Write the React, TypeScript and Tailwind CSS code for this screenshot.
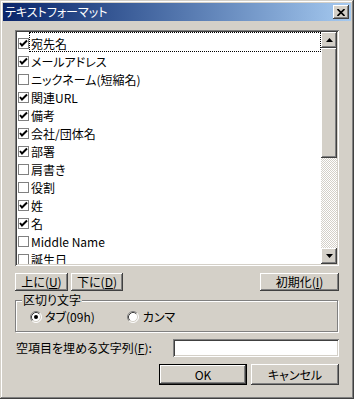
import React from "react";

const bevelOut =
  "shadow-[inset_-1px_-1px_#404040,inset_1px_1px_#ffffff,inset_-2px_-2px_#808080,inset_2px_2px_#d4d0c8]";
const sunken =
  "shadow-[inset_1px_1px_#808080,inset_-1px_-1px_#ffffff,inset_2px_2px_#404040,inset_-2px_-2px_#d4d0c8]";

const items: [string, boolean][] = [
  ["宛先名", true],
  ["メールアドレス", true],
  ["ニックネーム(短縮名)", false],
  ["関連URL", true],
  ["備考", true],
  ["会社/団体名", true],
  ["部署", true],
  ["肩書き", false],
  ["役割", false],
  ["姓", true],
  ["名", true],
  ["Middle Name", false],
  ["誕生日", false],
];

function Check({ on }: { on: boolean }) {
  return (
    <span className="w-[11px] h-[11px] border border-[#808080] bg-white flex items-center justify-center shrink-0">
      {on && (
        <svg width="9" height="9" viewBox="0 0 9 9">
          <path d="M1 4 L3 6.5 L8 1.5" stroke="#000" strokeWidth="2" fill="none" />
        </svg>
      )}
    </span>
  );
}

function Radio({ on }: { on: boolean }) {
  return (
    <svg width="12" height="12" viewBox="0 0 12 12" className="shrink-0">
      <circle cx="6" cy="6" r="5" fill="#fff" />
      <path d="M2.11 9.89 A5.5 5.5 0 0 1 9.89 2.11" stroke="#808080" fill="none" />
      <path d="M9.89 2.11 A5.5 5.5 0 0 1 2.11 9.89" stroke="#ffffff" fill="none" />
      <path d="M2.82 9.18 A4.5 4.5 0 0 1 9.18 2.82" stroke="#404040" fill="none" />
      <path d="M9.18 2.82 A4.5 4.5 0 0 1 2.82 9.18" stroke="#d4d0c8" fill="none" />
      {on && <circle cx="6" cy="6" r="2" fill="#000" />}
    </svg>
  );
}

function Btn({ children, className = "" }: { children: React.ReactNode; className?: string }) {
  return (
    <div className={`${bevelOut} bg-[#d4d0c8] flex items-center justify-center ${className}`}>
      {children}
    </div>
  );
}

export default function App() {
  return (
    <div className="w-[354px] h-[399px] bg-[#d4d0c8] p-[3px] shadow-[inset_-1px_-1px_#404040,inset_1px_1px_#d4d0c8,inset_-2px_-2px_#808080,inset_2px_2px_#ffffff] font-[family-name:Noto_Sans_CJK_JP,sans-serif] text-[12px] leading-none text-black [font-feature-settings:'palt'] flex flex-col overflow-hidden">
      {/* Title bar */}
      <div className="h-[18px] flex items-center justify-between bg-gradient-to-r from-[#0a246a] to-[#a6caf0] pl-[2px] pr-[2px] shrink-0">
        <span className="text-white text-[12px]">テキストフォーマット</span>
        <div className={`${bevelOut} bg-[#d4d0c8] w-[16px] h-[14px] flex items-center justify-center`}>
          <svg width="8" height="7" viewBox="0 0 8 7">
            <path d="M0.5 0 L7.5 7 M7.5 0 L0.5 7" stroke="#000" strokeWidth="1.6" />
          </svg>
        </div>
      </div>

      {/* Body */}
      <div className="flex flex-col pl-[12px] pr-[12px] pt-[9px]">
        {/* List */}
        <div className={`${sunken} bg-white h-[236px] p-[2px] flex`}>
          <div className="flex-1 pt-[2px] overflow-hidden">
            {items.map(([label, on], i) => (
              <div key={label} className="h-[18px] flex items-center pl-[1px]">
                <Check on={on} />
                <span className="relative flex-1 h-full flex items-center pl-[1px]">
                  {i === 0 && (
                    <span className="absolute left-0 right-0 top-[-2px] bottom-0 border border-dotted border-black" />
                  )}
                  <span className="pl-[1px] pt-[1px]">{label}</span>
                </span>
              </div>
            ))}
          </div>
          <div className="w-[16px] flex flex-col">
            <div className={`${bevelOut} bg-[#d4d0c8] h-[16px] flex items-center justify-center`}>
              <svg width="7" height="4" viewBox="0 0 7 4">
                <polygon points="3.5,0 7,4 0,4" fill="#000" />
              </svg>
            </div>
            <div className={`${bevelOut} bg-[#d4d0c8] h-[110px]`} />
            <div className="flex-1 bg-[image:repeating-conic-gradient(#d4d0c8_0_25%,#ffffff_0_50%)] bg-[length:2px_2px]" />
            <div className={`${bevelOut} bg-[#d4d0c8] h-[16px] flex items-center justify-center`}>
              <svg width="7" height="4" viewBox="0 0 7 4">
                <polygon points="0,0 7,0 3.5,4" fill="#000" />
              </svg>
            </div>
          </div>
        </div>

        {/* Move / reset buttons */}
        <div className="flex mt-[7px] h-[18px]">
          <Btn className="w-[53px]">
            上に(<span className="underline">U</span>)
          </Btn>
          <Btn className="w-[52px] ml-[3px]">
            下に(<span className="underline">D</span>)
          </Btn>
          <div className="flex-1" />
          <Btn className="w-[79px]">
            初期化(<span className="underline">I</span>)
          </Btn>
        </div>

        {/* Group box */}
        <div className="relative mt-[9px] h-[32px] mr-[1px] border border-[#808080] shadow-[inset_1px_1px_#ffffff,1px_1px_#ffffff] flex items-center">
          <span className="absolute left-[6px] top-[-7px] bg-[#d4d0c8] px-[1px]">区切り文字</span>
          <div className="flex items-center pl-[14px] pt-[1px]">
            <Radio on={true} />
            <span className="ml-[3px]">タブ(09h)</span>
          </div>
          <div className="flex items-center ml-[32px] pt-[1px]">
            <Radio on={false} />
            <span className="ml-[4px]">カンマ</span>
          </div>
        </div>

        {/* Fill string */}
        <div className="flex items-center mt-[7px] h-[18px]">
          <span className="ml-[1px]">
            空項目を埋める文字列(<span className="underline">F</span>):
          </span>
          <div className="flex-1" />
          <div className={`${sunken} bg-white w-[166px] h-[18px]`} />
        </div>

        {/* OK / Cancel */}
        <div className="flex justify-end mt-[7px] gap-[4px]">
          <div className="w-[88px] h-[21px] border border-black">
            <Btn className="w-full h-full">OK</Btn>
          </div>
          <Btn className="w-[88px] h-[21px]">キャンセル</Btn>
        </div>
      </div>
    </div>
  );
}
